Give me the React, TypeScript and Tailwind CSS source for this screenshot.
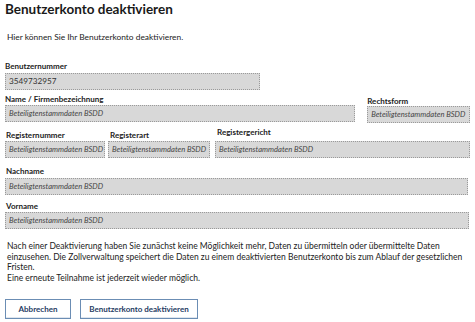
import React from 'react';

const font = { fontFamily: 'Lato, "Open Sans", sans-serif' };

function Label({ children, className = '' }: { children: React.ReactNode; className?: string }) {
  return <div className={`text-[8px] leading-[10px] font-bold text-[#222] ${className}`}>{children}</div>;
}

function Box({ value, italic = true, className = '' }: { value: string; italic?: boolean; className?: string }) {
  return (
    <div
      className={`h-[17px] bg-[#d8d8d8] border border-dotted border-[#9a9a9a] px-[3px] flex items-center overflow-hidden whitespace-nowrap ${
        italic ? 'italic text-[7.6px] text-[#444]' : 'text-[8.2px] text-[#333]'
      } ${className}`}
    >
      {value}
    </div>
  );
}

const sample = 'Beteiligtenstammdaten BSDD';

export default function App() {
  return (
    <div className="w-[475px] h-[322px] bg-white px-[5px] overflow-hidden" style={font}>
      <h1 className="text-[13.5px] leading-[17px] font-bold text-[#1a1a1a] pt-[1px]">Benutzerkonto deaktivieren</h1>

      <p className="mt-[14px] ml-[2px] text-[8.4px] leading-[10px] text-[#222]">
        Hier können Sie Ihr Benutzerkonto deaktivieren.
      </p>

      <div className="mt-[19px]">
        <Label>Benutzernummer</Label>
        <Box value="3549732957" italic={false} className="mt-[2px] w-[255px]" />
      </div>

      <div className="mt-[4px] flex items-start gap-[12px]">
        <div className="w-[351px]">
          <Label>Name / Firmenbezeichnung</Label>
          <Box value={sample} className="mt-[1px]" />
        </div>
        <div className="w-[103px]">
          <Label className="pt-[2px]">Rechtsform</Label>
          <Box value={sample} />
        </div>
      </div>

      <div className="mt-[4px] flex items-start gap-[3px]">
        <div className="w-[100px]">
          <Label className="pt-[3px] pl-[1px]">Registernummer</Label>
          <Box value={sample} className="mt-[1px]" />
        </div>
        <div className="w-[102px]">
          <Label className="pt-[3px] pl-[2px]">Registerart</Label>
          <Box value={sample} className="mt-[1px]" />
        </div>
        <div className="ml-[2px] w-[255px]">
          <Label className="pl-[2px]">Registergericht</Label>
          <Box value={sample} className="mt-[4px]" />
        </div>
      </div>

      <div className="mt-[8px] w-[463px]">
        <Label className="pl-[1px]">Nachname</Label>
        <Box value={sample} className="mt-[2px]" />
      </div>

      <div className="mt-[6px] w-[464px]">
        <Label className="pl-[1px]">Vorname</Label>
        <Box value={sample} className="mt-[1px]" />
      </div>

      <div className="mt-[12px] ml-[2px] w-[458px] text-[8.5px] leading-[10.7px] text-[#222]">
        <p>
          Nach einer Deaktivierung haben Sie zunächst keine Möglichkeit mehr, Daten zu übermitteln oder übermittelte Daten
          einzusehen. Die Zollverwaltung speichert die Daten zu einem deaktivierten Benutzerkonto bis zum Ablauf der
          gesetzlichen Fristen.
        </p>
        <p>Eine erneute Teilnahme ist jederzeit wieder möglich.</p>
      </div>

      <div className="mt-[15px] flex gap-[9px]">
        <button className="w-[66px] h-[20px] border border-[#6b8db4] bg-white text-[8px] font-bold text-[#1f3b63] shadow-[inset_0_-1px_0_#dfe6ee]">
          Abbrechen
        </button>
        <button className="w-[118px] h-[20px] border border-[#6b8db4] bg-white text-[8px] font-bold text-[#1f3b63] shadow-[inset_0_-1px_0_#dfe6ee]">
          Benutzerkonto deaktivieren
        </button>
      </div>
    </div>
  );
}
